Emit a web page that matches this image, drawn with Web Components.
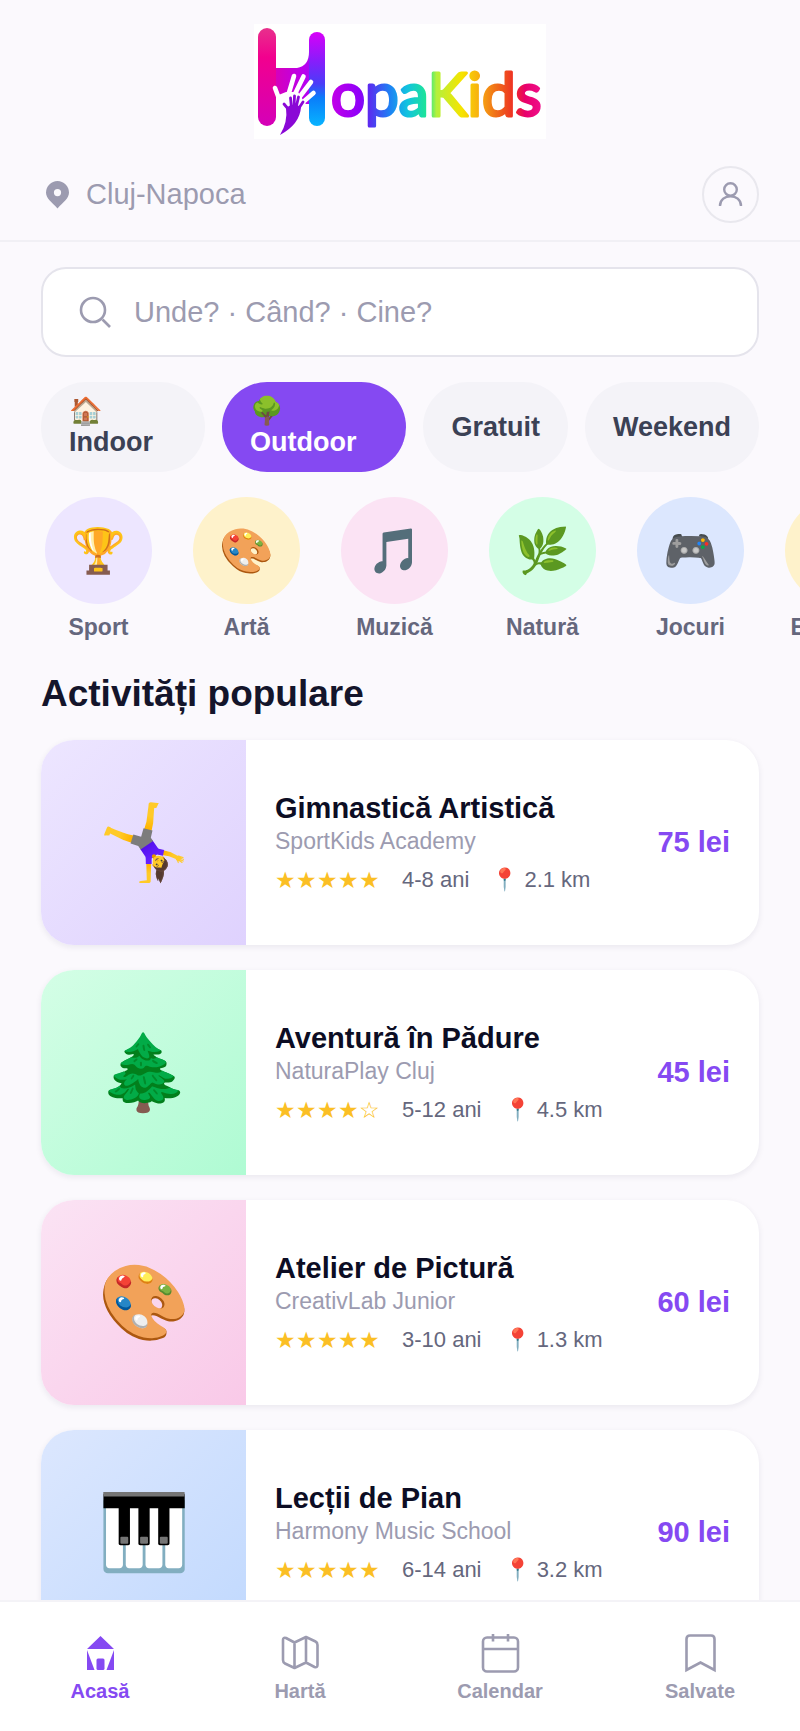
<!DOCTYPE html>
<html lang="ro">
<head>
<meta charset="utf-8">
<meta name="viewport" content="width=device-width, initial-scale=1">
<title>HopaKids</title>
<style>
  :root {
    --accent: #8549f2;
    --muted: #9c9bb0;
    --line: #e5e4ec;
    --page: #fbf9fd;
    --side: 41px;
  }
  body {
    margin: 0;
    background: var(--page);
    font-family: "Liberation Sans", Arial, sans-serif;
  }
</style>
</head>
<body>
<kids-app>
  <kids-logo slot="header"></kids-logo>
  <location-bar slot="header">Cluj-Napoca</location-bar>

  <search-box placeholder="Unde? · Când? · Cine?"></search-box>
  <scroll-row style="--gap: 17px">
    <filter-chip>🏠 Indoor</filter-chip>
    <filter-chip active>🌳 Outdoor</filter-chip>
    <filter-chip>Gratuit</filter-chip>
    <filter-chip>Weekend</filter-chip>
  </scroll-row>
  <scroll-row bleed style="--gap: 33px">
    <category-link icon="🏆" style="--tint: #ede6ff">Sport</category-link>
    <category-link icon="🎨" style="--tint: #fef2cb">Artă</category-link>
    <category-link icon="🎵" style="--tint: #fbe3f4">Muzică</category-link>
    <category-link icon="🌿" style="--tint: #d4fee6">Natură</category-link>
    <category-link icon="🎮" style="--tint: #dce7fe">Jocuri</category-link>
    <category-link icon="📚" style="--tint: #fef2cb">Educație</category-link>
  </scroll-row>
  <activity-list heading="Activități populare">
    <activity-card icon="🤸‍♀️" name="Gimnastică Artistică" place="SportKids Academy" stars="5" age="4-8 ani" distance="2.1 km" price="75 lei" style="--from: #ede6ff; --to: #dfd2fe"></activity-card>
    <activity-card icon="🌲" name="Aventură în Pădure" place="NaturaPlay Cluj" stars="4" age="5-12 ani" distance="4.5 km" price="45 lei" style="--from: #d4fee6; --to: #affbd3"></activity-card>
    <activity-card icon="🎨" name="Atelier de Pictură" place="CreativLab Junior" stars="5" age="3-10 ani" distance="1.3 km" price="60 lei" style="--from: #fbe3f4; --to: #f9c9e8"></activity-card>
    <activity-card icon="🎹" name="Lecții de Pian" place="Harmony Music School" stars="5" age="6-14 ani" distance="3.2 km" price="90 lei" style="--from: #dce7fe; --to: #c1d9fe"></activity-card>
  </activity-list>

  <tab-bar slot="footer"></tab-bar>
</kids-app>

<script>
function attach(host, html) {
  host.attachShadow({ mode: "open" }).innerHTML = html;
}

class KidsApp extends HTMLElement {
  connectedCallback() {
    attach(this, `
      <style>
        :host { display: flex; flex-direction: column; height: 100vh; overflow: hidden; }
        header { border-bottom: 2px solid #f1f0f5; }
        main {
          flex: 1;
          min-height: 0;
          overflow: hidden auto;
          scrollbar-width: none;
          display: flex;
          flex-direction: column;
          gap: 25px;
          padding: 25px var(--side);
        }
      </style>
      <header><slot name="header"></slot></header>
      <main><slot></slot></main>
      <slot name="footer"></slot>
    `);
  }
}

class KidsLogo extends HTMLElement {
  connectedCallback() {
    attach(this, `
      <style>
        :host { display: flex; justify-content: center; padding: 24px 0 20px; }
        svg { display: block; background: #fff; }
        text { font: 400 60px Lato, sans-serif; }
      </style>
      <svg width="292" height="115" viewBox="-2 0 292 115" role="img" aria-label="HopaKids">
        <defs>
          <linearGradient id="left" x1="0" y1="0" x2="0" y2="1">
            <stop offset="0" stop-color="#e8308c"/><stop offset=".3" stop-color="#f2008e"/>
            <stop offset="1" stop-color="#d400b8"/>
          </linearGradient>
          <linearGradient id="mid" gradientUnits="userSpaceOnUse" x1="18" y1="0" x2="70" y2="0">
            <stop offset="0" stop-color="#d800b8"/><stop offset=".6" stop-color="#b800f0"/>
            <stop offset="1" stop-color="#7a22fa"/>
          </linearGradient>
          <linearGradient id="right" x1="0" y1="0" x2="0" y2="1">
            <stop offset="0" stop-color="#d800f8"/><stop offset=".3" stop-color="#8a1cfb"/>
            <stop offset=".55" stop-color="#4a3cf8"/><stop offset=".7" stop-color="#0a7dfa"/>
            <stop offset="1" stop-color="#08b4ff"/>
          </linearGradient>
          <linearGradient id="rainbow" gradientUnits="userSpaceOnUse" x1="75" y1="0" x2="286" y2="0">
            <stop offset="0" stop-color="#c400e8"/><stop offset=".14" stop-color="#8d00fa"/>
            <stop offset=".18" stop-color="#5a2cf0"/><stop offset=".28" stop-color="#1d82f4"/>
            <stop offset=".36" stop-color="#12c2e0"/><stop offset=".46" stop-color="#1ee890"/>
            <stop offset=".5" stop-color="#b4f03c"/><stop offset=".62" stop-color="#f6e400"/>
            <stop offset=".7" stop-color="#f8b010"/><stop offset=".78" stop-color="#f07018"/>
            <stop offset=".87" stop-color="#ee2c24"/><stop offset=".92" stop-color="#e8006c"/>
            <stop offset="1" stop-color="#f0108c"/>
          </linearGradient>
        </defs>
        <path fill="url(#mid)" d="M18 44H41Q53 42 53 28H62V80H18Z"/>
        <rect fill="url(#left)" x="2" y="4" width="18" height="98" rx="9"/>
        <rect fill="url(#right)" x="53" y="8" width="16" height="94" rx="8"/>
        <g stroke="#fff" stroke-linecap="round" stroke-width="4.600">
          <path d="M38 52L32 72M47.500 52.500L38 72M55 58L42 75M57.500 69L46 79M19 64L25 80"/>
          <path fill="#fff" stroke="none" d="M20 72L30 68H42L49 79Q53 82 53 90V104H20Z"/>
        </g>
        <g stroke="#8a08d6" stroke-linecap="round" stroke-width="2.800">
          <path d="M28 80L33 86M34.500 74L35.500 84M38.500 72L38 84M42.500 73L40 84M47 78L41 87"/>
          <path fill="#8a08d6" stroke="none" d="M24 111Q32 98 30 84Q37 78 45 83Q44 100 24 111Z"/>
        </g>
        <text x="75" y="92" fill="url(#rainbow)" stroke="url(#rainbow)" stroke-width="3" stroke-linejoin="round">opaKids</text>
      </svg>
    `);
  }
}

class LocationBar extends HTMLElement {
  connectedCallback() {
    attach(this, `
      <style>
        :host {
          display: flex;
          align-items: center;
          justify-content: space-between;
          padding: 7px var(--side) 17px;
          color: var(--muted);
          font-size: 29px;
        }
        button { padding: 0; background: none; color: inherit; font: inherit; cursor: pointer; }
        .place { display: flex; align-items: center; gap: 12px; border: 0; }
        .user {
          display: grid;
          place-items: center;
          width: 57px;
          height: 57px;
          border: 2px solid #e9e8ee;
          border-radius: 50%;
        }
        svg { display: block; }
      </style>
      <button class="place" type="button">
        <svg width="33" height="33" viewBox="0 0 33 33" fill="currentColor" fill-rule="evenodd">
          <path d="M16.500 3A11.600 11.600 0 0 0 5 14.600C5 20.500 10.500 24 16.500 30.500C22.500 24 28 20.500 28 14.600A11.600 11.600 0 0 0 16.500 3ZM16.500 11a3.600 3.600 0 1 1 0 7.200a3.600 3.600 0 1 1 0-7.200Z"/>
        </svg>
        <slot></slot>
      </button>
      <button class="user" type="button" aria-label="Profil">
        <svg width="29" height="29" viewBox="0 0 29 29" fill="none" stroke="currentColor" stroke-width="2.400">
          <circle cx="14.500" cy="9.500" r="6.300"/>
          <path d="M4 26C4 13 25 13 25 26"/>
        </svg>
      </button>
    `);
  }
}

class SearchBox extends HTMLElement {
  connectedCallback() {
    attach(this, `
      <style>
        :host { display: block; }
        label {
          display: flex;
          align-items: center;
          gap: 20px;
          height: 86px;
          padding: 0 35px;
          border: 2px solid var(--line);
          border-radius: 25px;
          background: #fff;
          color: var(--muted);
        }
        svg { flex: none; }
        input {
          flex: 1;
          min-width: 0;
          padding: 0;
          border: 0;
          outline: 0;
          background: none;
          color: #12122a;
          font: inherit;
          font-size: 29px;
        }
        input::placeholder { color: var(--muted); opacity: 1; }
      </style>
      <label>
        <svg width="36" height="36" viewBox="0 0 36 36" fill="none" stroke="currentColor" stroke-width="2.600">
          <circle cx="15" cy="16" r="12"/>
          <path d="M24.500 25.500L32 33"/>
        </svg>
        <input type="search" aria-label="Caută" placeholder="${this.getAttribute("placeholder")}">
      </label>
    `);
  }
}

class ScrollRow extends HTMLElement {
  connectedCallback() {
    attach(this, `
      <style>
        :host { display: flex; flex: none; gap: var(--gap); }
        :host([bleed]) {
          margin: 0 calc(-1 * var(--side));
          padding: 0 var(--side);
          overflow: auto hidden;
          scrollbar-width: none;
        }
      </style>
      <slot></slot>
    `);
  }
}

class FilterChip extends HTMLElement {
  connectedCallback() {
    attach(this, `
      <style>
        :host { display: flex; }
        button {
          width: 100%;
          padding: 14px 28px;
          border: 0;
          border-radius: 45px;
          background: #f4f3f8;
          color: #3b4155;
          font: bold 27px/31px "Liberation Sans", Arial, sans-serif;
          text-align: left;
          cursor: pointer;
        }
        :host([active]) button { background: var(--accent); color: #fff; }
      </style>
      <button type="button" aria-pressed="${this.hasAttribute("active")}"><slot></slot></button>
    `);
  }
}

class CategoryLink extends HTMLElement {
  connectedCallback() {
    attach(this, `
      <style>
        :host { display: block; flex: none; width: 115px; }
        a {
          display: flex;
          flex-direction: column;
          align-items: center;
          gap: 10px;
          color: #65677d;
          font-size: 23px;
          font-weight: bold;
          line-height: 26px;
          text-decoration: none;
        }
        .icon {
          display: grid;
          place-items: center;
          width: 107px;
          height: 107px;
          border-radius: 50%;
          background: var(--tint);
          font-size: 44px;
          font-weight: normal;
          line-height: 52px;
        }
      </style>
      <a href="#"><span class="icon">${this.getAttribute("icon")}</span><slot></slot></a>
    `);
  }
}

class ActivityList extends HTMLElement {
  connectedCallback() {
    attach(this, `
      <style>
        :host { display: flex; flex-direction: column; gap: 25px; }
        h2 { margin: 8px 0 0; color: #14152b; font-size: 37px; line-height: 42px; }
      </style>
      <h2>${this.getAttribute("heading")}</h2>
      <slot></slot>
    `);
  }
}

class ActivityCard extends HTMLElement {
  connectedCallback() {
    const { icon, name, place, stars, age, distance, price } = Object.fromEntries(
      [...this.attributes].map((a) => [a.name, a.value])
    );
    const rating = "★".repeat(stars) + "☆".repeat(5 - stars);
    attach(this, `
      <style>
        :host {
          display: flex;
          flex: none;
          align-items: center;
          overflow: hidden;
          border-radius: 33px;
          background: #fff;
          box-shadow: 0 2px 6px rgba(30, 20, 60, 0.08);
        }
        .thumb {
          display: grid;
          place-items: center;
          width: 205px;
          height: 205px;
          background: linear-gradient(135deg, var(--from), var(--to));
          font-size: 74px;
          line-height: 88px;
        }
        .info { flex: 1; padding: 0 29px; }
        h3 { margin: 0; color: #0c0d24; font-size: 29px; line-height: 34px; }
        p { margin: 0; color: var(--muted); font-size: 23px; line-height: 32px; }
        .meta {
          display: flex;
          align-items: center;
          gap: 22px;
          margin-top: 8px;
          color: #65677d;
          font-size: 22px;
          line-height: 30px;
        }
        .stars { color: #fbbf24; font-size: 23px; }
        .price { padding-right: 29px; color: var(--accent); font-size: 29px; font-weight: bold; }
      </style>
      <div class="thumb">${icon}</div>
      <div class="info">
        <h3>${name}</h3>
        <p>${place}</p>
        <div class="meta">
          <span class="stars">${rating}</span>
          <span>${age}</span>
          <span>📍 ${distance}</span>
        </div>
      </div>
      <div class="price">${price}</div>
    `);
  }
}

class TabBar extends HTMLElement {
  connectedCallback() {
    attach(this, `
      <style>
        :host { display: block; flex: none; border-top: 2px solid #f4f3f7; background: #fff; }
        nav { display: grid; grid-template-columns: repeat(4, 1fr); padding: 29px 0 27px; }
        a {
          display: flex;
          flex-direction: column;
          align-items: center;
          gap: 2px;
          color: var(--muted);
          font-size: 20px;
          font-weight: bold;
          line-height: 26px;
          text-decoration: none;
        }
        a[aria-current] { color: var(--accent); }
        svg { display: block; fill: none; stroke: currentColor; stroke-width: 2.600; }
      </style>
      <nav>
        <a href="#" aria-current="page">
          <svg width="45" height="45" viewBox="0 0 45 45">
            <g fill="currentColor" stroke="none">
              <path d="M22.500 5L36 18H9ZM9 19L16.500 39H9ZM36 19V39H28.500Z"/>
              <rect x="18.500" y="27.500" width="8" height="11.500" rx="1.500"/>
            </g>
          </svg>
          Acasă
        </a>
        <a href="#">
          <svg width="45" height="45" viewBox="0 0 45 45" stroke-linejoin="round">
            <path d="M5 9Q5 6 8 7L16.500 11.500L28 6L37.500 10.500Q39.500 11.500 39.500 14V34Q39.500 37 36.500 36L28 31.500L16.500 37L7 32.500Q5 31.500 5 29ZM16.500 11.500V37M28 6V31.500"/>
          </svg>
          Hartă
        </a>
        <a href="#">
          <svg width="45" height="45" viewBox="0 0 45 45">
            <rect x="5" y="6.500" width="35" height="34" rx="4"/>
            <path d="M5 18H40M15 3V10.500M30 3V10.500"/>
          </svg>
          Calendar
        </a>
        <a href="#">
          <svg width="45" height="45" viewBox="0 0 45 45">
            <path d="M8.500 39V8Q8.500 4.500 12 4.500H33Q36.500 4.500 36.500 8V39L22.500 31.500Z"/>
          </svg>
          Salvate
        </a>
      </nav>
    `);
  }
}

customElements.define("kids-app", KidsApp);
customElements.define("kids-logo", KidsLogo);
customElements.define("location-bar", LocationBar);
customElements.define("search-box", SearchBox);
customElements.define("scroll-row", ScrollRow);
customElements.define("filter-chip", FilterChip);
customElements.define("category-link", CategoryLink);
customElements.define("activity-list", ActivityList);
customElements.define("activity-card", ActivityCard);
customElements.define("tab-bar", TabBar);
</script>
</body>
</html>
